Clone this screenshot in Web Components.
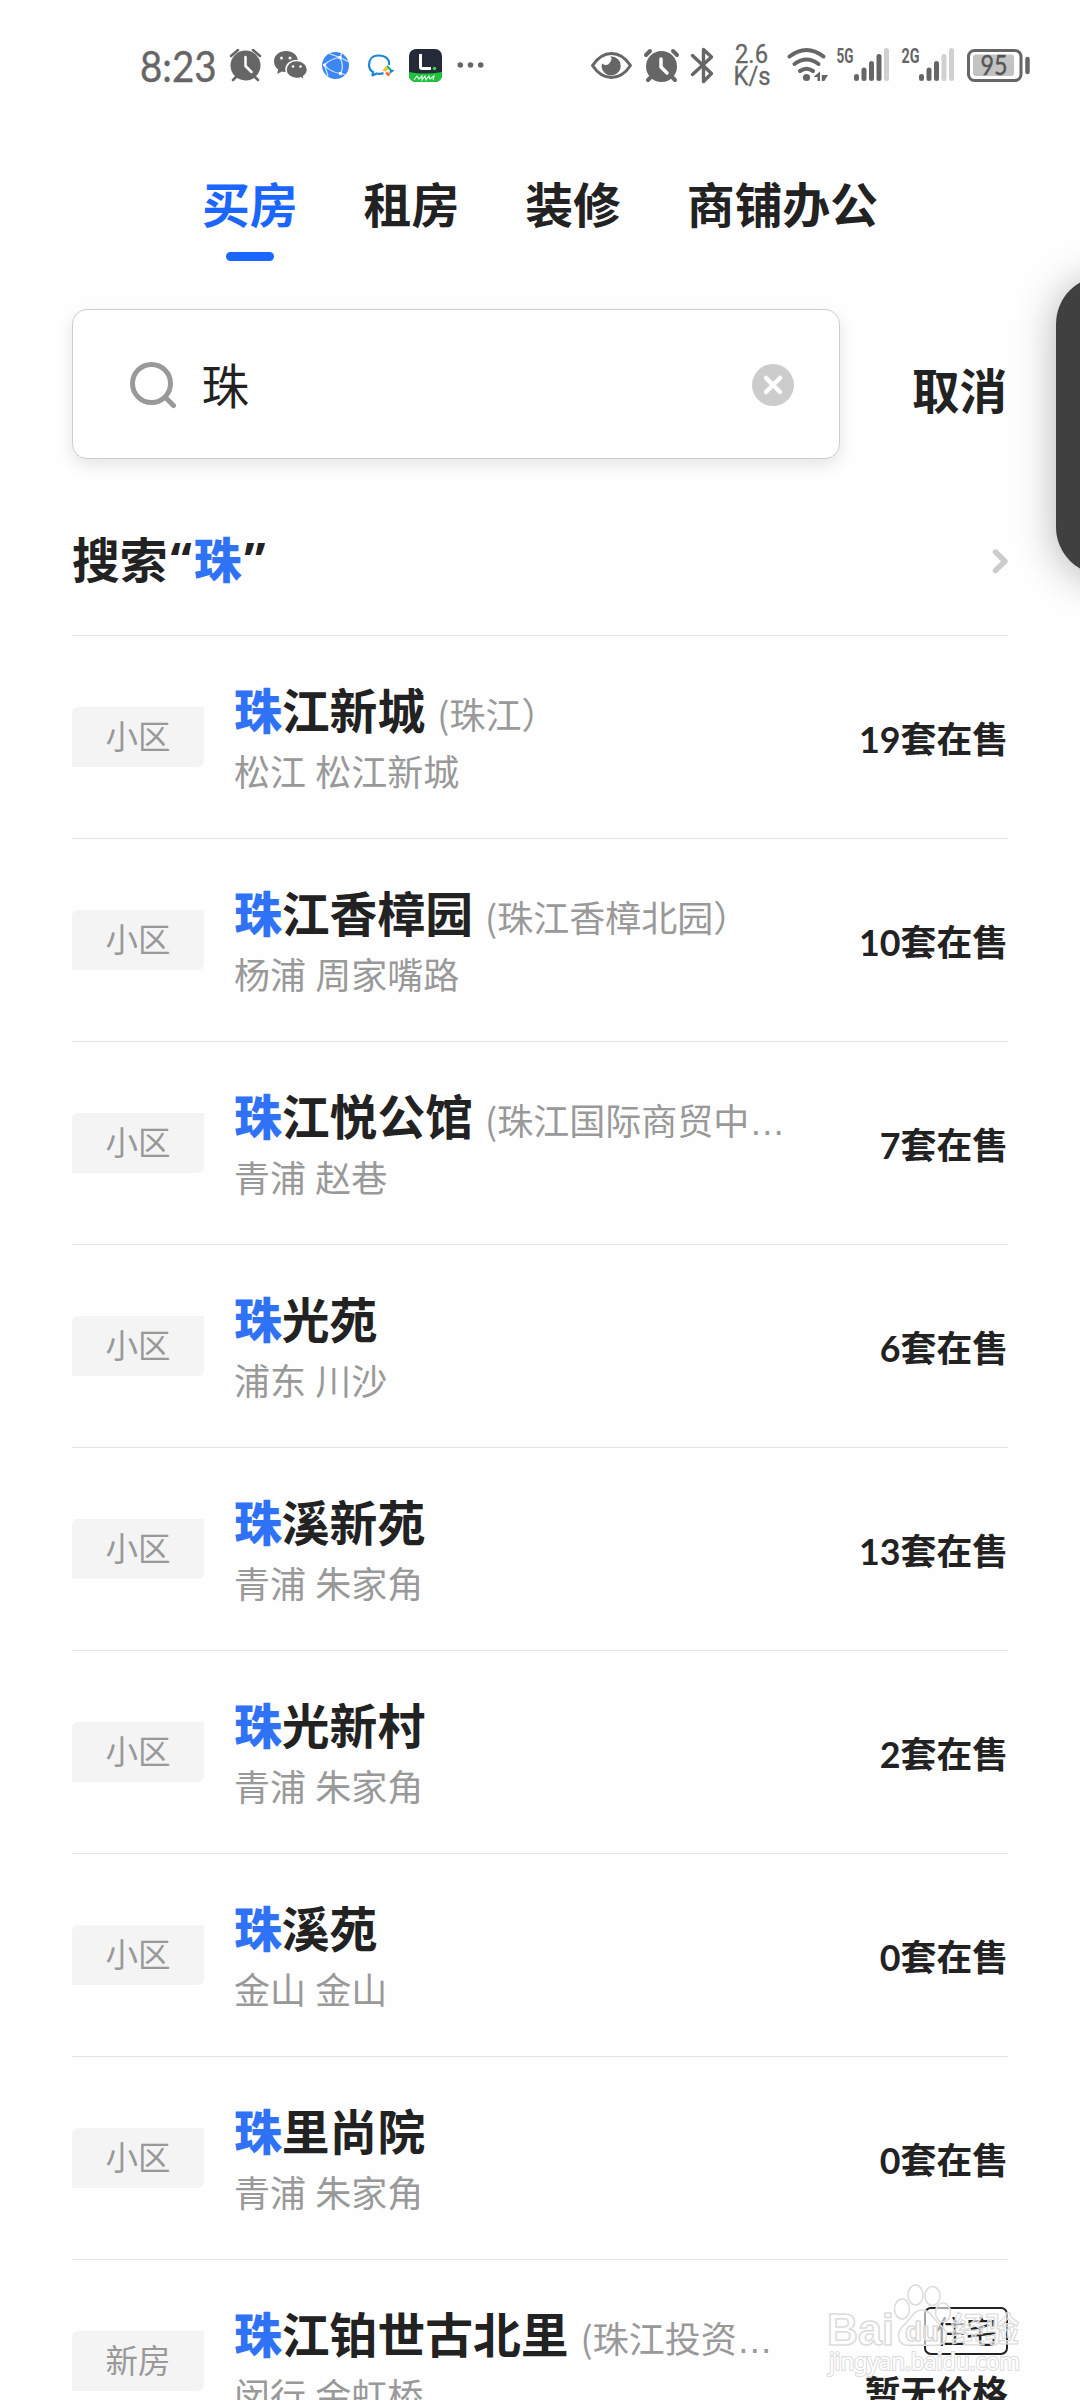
<!DOCTYPE html>
<html lang="zh-CN">
<head>
<meta charset="utf-8">
<title>搜索</title>
<style>
  html, body {
    margin: 0;
    background: #fefefe;
  }

  body {
    width: 1080px;
    height: 2400px;
    overflow: hidden;
    font-family: Lato, "Noto Sans CJK SC", sans-serif;
    color: #222;
  }
</style>
</head>
<body>
<search-page></search-page>

<script>
const define = (name, html) => {
  const template = document.createElement('template');
  template.innerHTML = html;

  window.customElements.define(name, class extends HTMLElement {
    constructor() {
      super();
      this.attachShadow({mode: 'open'}).append(template.content.cloneNode(true));
    }
  });
};

// every icon uses screen coordinates in its viewBox, so the icons tile left to right
define('status-bar', `
  <style>
    :host {
      display: flex;
      box-sizing: border-box;
      height: 140px;
      padding: 40px 0 0 130px;
      color: #666;
    }

    svg {
      display: block;
      flex: none;
      height: 50px;
      fill: currentColor;
    }

    .line {
      fill: none;
      stroke: currentColor;
      stroke-linecap: round;
      stroke-linejoin: round;
    }

    .off {
      stroke: #d0d0d0;
    }

    .time { font: 42px Lato, sans-serif; stroke: currentColor; stroke-width: .4px; }
    .speed { font: 25.5px Roboto, sans-serif; stroke: currentColor; stroke-width: .3px; }
    .net { font: bold 21px Roboto, sans-serif; }
    .level { font: 26px Lato, sans-serif; fill: #555; stroke: #555; stroke-width: .4px; }
    .spacer { flex: none; width: 95px; }
  </style>

  <svg width="95" viewBox="130 40 95 50">
    <text class="time" x="140" y="81.500" textLength="76.500" lengthAdjust="spacingAndGlyphs">8:23</text>
  </svg>

  <svg width="45" viewBox="225 40 45 50">
    <circle cx="245.500" cy="65.500" r="15"/>
    <path class="line" stroke-width="2.500" d="M231 56l7-6M260 56l-7-6M236 77l-3 3M255 77l3 3"/>
    <path class="line" style="stroke: #fefefe" stroke-width="2.500" d="M245.500 57v9l6 6"/>
  </svg>

  <svg width="45" viewBox="270 40 45 50">
    <path d="M286 51c-7 0-12 4.500-12 10.500 0 3.500 1.700 6 4.200 8l-1 4.500 4.800-2.600c1.500.4 3 .5 4.500.5 6.500 0 11.500-4.500 11.500-10.400S293 51 286 51z"/>
    <path stroke="#fefefe" stroke-width="1.500" d="M296.500 60.500c-6 0-10.500 4-10.500 9s4.500 9 10.500 9c1.500 0 2.800-.2 4-.6l4 2-1-3.400c2.500-1.700 4-4 4-7 0-5-5-9-11-9z"/>
    <g fill="#fefefe">
      <circle cx="281.500" cy="58" r="1.500"/><circle cx="290" cy="58" r="1.500"/>
      <circle cx="293" cy="66.500" r="1.300"/><circle cx="300.500" cy="66.500" r="1.300"/>
    </g>
  </svg>

  <svg width="45" viewBox="315 40 45 50">
    <circle cx="335.500" cy="65.500" r="13.500" fill="#3b86f2"/>
    <g fill="none" stroke="#d8e8ff" stroke-width="1.200">
      <path d="M340 57.500q-9 1-16 7.500M340 57.500q4.500 9 .5 16.500M324.500 65q6 7.500 16.500 8.500M340 57.500l2-4.500M341 73.500l4 1M329 53.500l11 4M340 57.500l8 4M324.500 65l3.500 11"/>
    </g>
    <g fill="#fff"><circle cx="340" cy="57.500" r="1.800"/><circle cx="324.500" cy="65" r="1.600"/><circle cx="340.500" cy="73.500" r="1.800"/></g>
  </svg>

  <svg width="45" viewBox="360 40 45 50">
    <path fill="none" stroke="#1a85d8" stroke-width="2.200" stroke-linejoin="round" d="M389 65c1-6-4-9.500-10.500-9.500S369 60 369 65c0 3 1.500 5.500 4 7l-.5 3.500 4-2c2.500.6 5 .5 7-.4"/>
    <path fill="#fbbd18" d="M386 66l-3.500 5 3 .5 2.500-2.500z"/>
    <path fill="#2ab75d" d="M387.500 65l4 4-2 1.500-3-3.500z"/>
    <path fill="#1a85d8" d="M394.500 70.500l-5 3.500.5-5z"/>
    <path fill="#f2652a" d="M385 73l3.500 3.500 2-2.500-3-2z"/>
  </svg>

  <svg width="45" viewBox="405 40 45 50">
    <clipPath id="app"><rect x="409" y="49" width="33" height="33" rx="7"/></clipPath>
    <g clip-path="url(#app)">
      <path fill="#252a38" d="M405 45h40v40h-40z"/>
      <path fill="#1fc23c" d="M409 72q16 3 33 0v12h-33z"/>
      <path fill="none" stroke="#fff" stroke-width="3" d="M420.500 54v13q0 1.500 1.500 1.500h9"/>
      <circle cx="434.500" cy="68.500" r="1.800" fill="#30d45a"/>
      <path fill="none" stroke="#d9f7dd" stroke-width="1.200" d="M414 80l3-4 2 3 3-3v4l3-4 1 4 3-4 1 3 4-3-1 4"/>
    </g>
  </svg>

  <svg width="40" viewBox="450 40 40 50">
    <circle cx="460.300" cy="65" r="2.800"/><circle cx="470.500" cy="65" r="2.800"/><circle cx="480.700" cy="65" r="2.800"/>
  </svg>

  <div class="spacer"></div>

  <svg width="55" viewBox="585 40 55 50">
    <path class="line" stroke-width="3" d="M592.500 65.500q8-12 19-12t19 12q-8 12-19 12t-19-12z"/>
    <path d="M610 56.500a9.500 9.500 0 1 1-8 7q5 3.500 8-1t0-6z"/>
  </svg>

  <svg width="47" viewBox="640 40 47 50">
    <circle cx="661.500" cy="66.500" r="15.500"/>
    <path class="line" stroke-width="4" d="M646 55l4-4M677 55l-4-4M651 77l-3 3M672 77l3 3"/>
    <path class="line" style="stroke: #fefefe" stroke-width="3.500" d="M661 59v8l6 6"/>
  </svg>

  <svg width="40" viewBox="687 40 40 50">
    <path class="line" stroke-width="3.400" d="M692.500 55.500l19 18-8 8V49.500l8 7.500-19 17.500"/>
  </svg>

  <svg width="53" viewBox="727 40 53 50">
    <text class="speed" x="735" y="63" textLength="33" lengthAdjust="spacingAndGlyphs">2.6</text>
    <text class="speed" x="733.500" y="85" textLength="37" lengthAdjust="spacingAndGlyphs">K/s</text>
  </svg>

  <svg width="52" viewBox="780 40 52 50">
    <path class="line" stroke-width="4" d="M789.500 56.500q17-13 34 0M794.500 64q12-9 24 0M800 71q6.500-4.500 13 0"/>
    <circle cx="806.500" cy="77.500" r="3.600"/>
    <path d="M820 71.500v9.500h-2.500v-4h-4zM821.800 81v-6h6.200l-3.700 6z"/>
  </svg>

  <svg width="65" viewBox="832 40 65 50">
    <text class="net" x="836.500" y="62.500" textLength="17" lengthAdjust="spacingAndGlyphs">5G</text>
    <path class="line" stroke-width="5" d="M856.500 76.500v2M864 70v8.500M871.500 63.500v15M879 56.500v22"/>
    <path class="line off" stroke-width="5" d="M886.500 50.500v28"/>
  </svg>

  <svg width="64" viewBox="897 40 64 50">
    <text class="net" x="901.500" y="62.500" textLength="18" lengthAdjust="spacingAndGlyphs">2G</text>
    <path class="line" stroke-width="5" d="M921.500 76.500v2M929 70v8.500M936.500 63.500v15"/>
    <path class="line off" stroke-width="5" d="M944 56.500v22M951.500 50.500v28"/>
  </svg>

  <svg width="75" viewBox="961 40 75 50">
    <rect x="968.500" y="50.500" width="52.500" height="30" rx="6" fill="none" stroke="currentColor" stroke-width="3"/>
    <rect x="973" y="54.500" width="41" height="21.500" rx="3" fill="#c3c3c3"/>
    <path class="line" stroke-width="4.500" d="M1027.500 59v13"/>
    <text class="level" x="980.500" y="74.800" textLength="27" lengthAdjust="spacingAndGlyphs">95</text>
  </svg>
`);

define('channel-tab', `
  <style>
    :host {
      display: flex;
      flex-direction: column;
      align-items: center;
      font-size: 47.800px;
      line-height: 70px;
      font-weight: 700;
    }

    :host([active]) {
      color: #1a66ff;
    }

    :host([active])::after {
      content: '';
      width: 48px;
      height: 9px;
      margin-top: 12px;
      border-radius: 5px;
      background: #1a66ff;
    }
  </style>
  <slot></slot>
`);

define('search-box', `
  <style>
    :host {
      display: flex;
      align-items: center;
      box-sizing: border-box;
      width: 768px;
      height: 150px;
      padding: 0 45px 0 56px;
      border: 1.500px solid #cccdd2;
      border-radius: 15px;
      background: #fff;
      box-shadow: 0 6px 16px rgba(0, 0, 0, .1);
      font-size: 47.500px;
    }

    .text {
      flex: 1;
      margin: 4px 0 0 24.500px;
      line-height: 70px;
    }

    svg {
      display: block;
      fill: none;
      stroke-linecap: round;
    }

    .clear { margin-top: 2px; }
  </style>
  <svg width="48" height="50" viewBox="0 0 48 50" stroke="#999" stroke-width="5">
    <circle cx="22.500" cy="24.500" r="19"/>
    <path d="M36.500 38.500l8 8"/>
  </svg>
  <div class="text"><slot></slot></div>
  <svg class="clear" width="42" height="42" viewBox="0 0 42 42">
    <circle cx="21" cy="21" r="21" fill="#ccc"/>
    <path stroke="#fff" stroke-width="4.500" d="M14 14l14 14M28 14l-14 14"/>
  </svg>
`);

define('search-hint', `
  <style>
    :host {
      display: flex;
      align-items: center;
      justify-content: space-between;
      box-sizing: border-box;
      height: 151px;
      border-bottom: 1px solid #e4e4e4;
      font-size: 47.700px;
      line-height: 70px;
      font-weight: 700;
    }

    ::slotted(b) { color: #3072f6; }
    ::slotted(q) {
      font-family: "Noto Sans", sans-serif;
      letter-spacing: 2px;
      margin-left: 3px;
      quotes: none;
    }
    svg { display: block; margin-top: 1px; }
  </style>
  <div><slot></slot></div>
  <svg width="16" height="26" viewBox="0 0 16 26" fill="none" stroke="#ccc" stroke-width="5.400" stroke-linecap="round" stroke-linejoin="round">
    <path d="M3.500 4l9.500 9.300L3.500 22.500"/>
  </svg>
`);

define('result-row', `
  <style>
    :host {
      display: flex;
      box-sizing: border-box;
      height: 203px;
      border-bottom: 1px solid #e4e4e4;
      color: #999;
      font-size: 36px;
      white-space: nowrap;
    }

    .tag {
      flex: none;
      width: 132px;
      height: 60px;
      margin-top: 71px;
      border-radius: 6px 0 6px 0;
      background: #f4f4f4;
      font-size: 32.500px;
      line-height: 60px;
      text-align: center;
    }

    .info {
      flex: 1;
      margin: 40px 0 0 30px;
    }

    .title {
      display: flex;
      align-items: baseline;
      height: 70px;
      line-height: 70px;
    }

    .name {
      color: #222;
      font-size: 47.800px;
      font-weight: 700;
    }

    .alias {
      margin-left: 12px;
      font-family: "Noto Sans CJK SC", sans-serif;
    }

    .area {
      margin-top: -1px;
      line-height: 54px;
    }

    .side {
      display: flex;
      flex-direction: column;
      align-items: flex-end;
      margin-top: 77px;
      color: #222;
      font-size: 35.800px;
      font-weight: 700;
      line-height: 54px;
    }

    :host([badge]) .side {
      margin-top: 47px;
    }

    ::slotted([slot=badge]) {
      box-sizing: border-box;
      width: 84px;
      height: 48px;
      margin-bottom: 12px;
      border: 2px solid #222;
      border-radius: 7px;
      font-size: 31px;
      font-weight: 400;
      line-height: 45px;
      text-align: center;
    }

    ::slotted(b) {
      color: #3072f6;
    }
  </style>
  <div class="tag"><slot name="tag">小区</slot></div>
  <div class="info">
    <div class="title">
      <div class="name"><slot></slot></div>
      <div class="alias"><slot name="alias"></slot></div>
    </div>
    <div class="area"><slot name="area"></slot></div>
  </div>
  <div class="side"><slot name="badge"></slot><slot name="count"></slot></div>
`);

// panel that peeks in from the right edge of the screen
define('edge-panel', `
  <style>
    :host {
      position: absolute;
      left: 1056px;
      top: 276px;
      width: 120px;
      height: 299px;
      border-radius: 48px;
      background: #404040;
      box-shadow: 0 4px 40px rgba(0, 0, 0, .3);
    }
  </style>
`);

define('page-mark', `
  <style>
    :host {
      position: absolute;
      left: 820px;
      top: 2276px;
    }

    svg {
      display: block;
      fill: rgba(255, 255, 255, .6);
      stroke: #dcdcdc;
      stroke-width: 1.600px;
    }

    .word { font: bold 44px "Liberation Sans", sans-serif; }
    .du { font: bold 28px "Liberation Sans", sans-serif; }
    .cn { font: bold 34px "Noto Sans CJK SC", sans-serif; stroke-width: 1.200px; }
    .url { font: 23.500px "Noto Sans", sans-serif; fill: #fff; paint-order: stroke; stroke-width: 2.200px; }
  </style>
  <svg width="210" height="110" viewBox="820 2276 210 110">
    <text class="word" x="827" y="2345" textLength="67" lengthAdjust="spacingAndGlyphs">Bai</text>
    <ellipse cx="902" cy="2309" rx="7.500" ry="10"/>
    <ellipse cx="915.500" cy="2295" rx="7.500" ry="10"/>
    <ellipse cx="932.500" cy="2296" rx="7.500" ry="9.500"/>
    <ellipse cx="943" cy="2312.500" rx="7.500" ry="9.500"/>
    <path d="M922 2310c-8 0-11 8-16 13-6 5-9 10-7 16 2 7 8 7 22 6 14 1 23 1 25-6 2-7-2-11-8-16-5-5-8-13-16-13z"/>
    <text class="du" x="905" y="2341" textLength="34" lengthAdjust="spacingAndGlyphs">du</text>
    <text class="cn" x="951" y="2342" textLength="68" lengthAdjust="spacingAndGlyphs">经验</text>
    <text class="url" x="829" y="2370" textLength="191" lengthAdjust="spacingAndGlyphs">jingyan.baidu.com</text>
  </svg>
`);

const results = [
  ['江新城', '(珠江）', '松江 松江新城', '19套在售'],
  ['江香樟园', '(珠江香樟北园）', '杨浦 周家嘴路', '10套在售'],
  ['江悦公馆', '(珠江国际商贸中…', '青浦 赵巷', '7套在售'],
  ['光苑', '', '浦东 川沙', '6套在售'],
  ['溪新苑', '', '青浦 朱家角', '13套在售'],
  ['光新村', '', '青浦 朱家角', '2套在售'],
  ['溪苑', '', '金山 金山', '0套在售'],
  ['里尚院', '', '青浦 朱家角', '0套在售'],
  ['江铂世古北里', '(珠江投资…', '闵行 金虹桥', '暂无价格', '新房', '住宅']
];

// Liberation Sans keeps the dots of the ellipsis on the baseline
const dots = text => text.replace('…', '<span style="font-family: Liberation Sans">…</span>');

const row = ([name, alias, area, count, tag, badge]) => `
  <result-row ${badge ? 'badge' : ''}>
    <b>珠</b>${name}
    ${alias ? `<span slot="alias">${dots(alias)}</span>` : ''}
    <span slot="area">${area}</span>
    <span slot="count">${count}</span>
    ${tag ? `<span slot="tag">${tag}</span>` : ''}
    ${badge ? `<span slot="badge">${badge}</span>` : ''}
  </result-row>
`;

define('search-page', `
  <style>
    :host {
      display: block;
      position: relative;
      width: 1080px;
      height: 2400px;
      overflow: hidden;
    }

    nav {
      display: flex;
      gap: 66px;
      height: 139px;
      padding: 29.500px 0 0 202px;
      box-sizing: border-box;
    }

    main {
      padding: 0 72px;
    }

    .bar {
      display: flex;
      align-items: center;
      justify-content: space-between;
      margin-top: 30px;
      margin-bottom: 26px;
    }

    .cancel {
      margin: 14px 1px 0 0;
      font-size: 47.500px;
      line-height: 70px;
      font-weight: 700;
    }
  </style>
  <status-bar></status-bar>
  <nav>
    <channel-tab active>买房</channel-tab>
    <channel-tab>租房</channel-tab>
    <channel-tab>装修</channel-tab>
    <channel-tab>商铺办公</channel-tab>
  </nav>
  <main>
    <div class="bar">
      <search-box>珠</search-box>
      <div class="cancel">取消</div>
    </div>
    <search-hint>搜索<q>“</q><b>珠</b><q>”</q></search-hint>
    ${results.map(row).join('')}
  </main>
  <edge-panel></edge-panel>
  <page-mark></page-mark>
`);
</script>
</body>
</html>
